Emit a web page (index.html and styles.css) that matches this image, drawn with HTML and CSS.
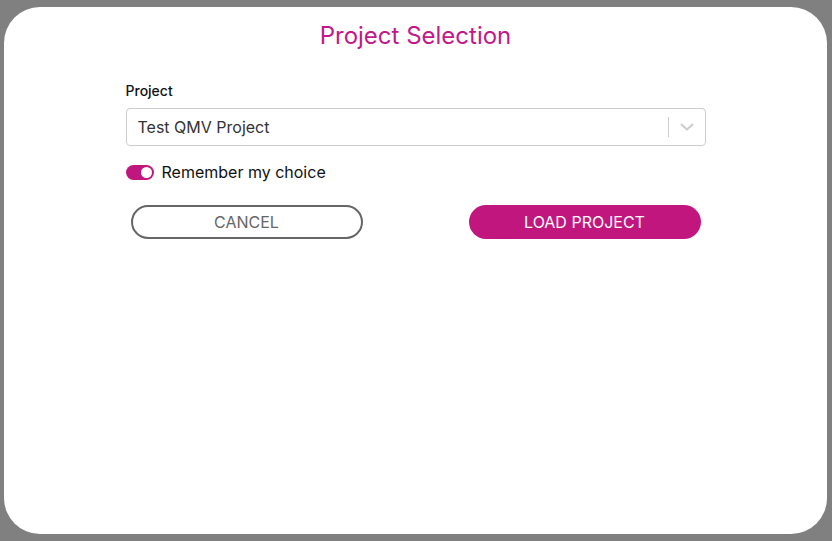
FILE: index.html
```html
<!DOCTYPE html>
<html>
<head>
<meta charset="utf-8">
<link rel="stylesheet" href="styles.css">
</head>
<body>
<div class="card">
  <h1 class="title">Project Selection</h1>
  <div class="content">
    <label class="label">Project</label>
    <div class="select">
      <span class="value">Test QMV Project</span>
      <span class="sep"></span>
      <span class="chev">
        <svg width="20" height="20" viewBox="0 0 20 20"><path d="M4.5 7.5 L10 12.5 L15.5 7.5" fill="none" stroke="#cccccc" stroke-width="2" stroke-linecap="round" stroke-linejoin="round"/></svg>
      </span>
    </div>
    <div class="remember">
      <span class="toggle"><span class="knob"></span></span>
      <span class="remember-text">Remember my choice</span>
    </div>
    <div class="buttons">
      <button class="btn btn-cancel">CANCEL</button>
      <button class="btn btn-load">LOAD PROJECT</button>
    </div>
  </div>
</div>
</body>
</html>
```
FILE: styles.css
```css
html, body {
  margin: 0;
  padding: 0;
}
body {
  background: #808080;
  width: 832px;
  height: 541px;
  padding: 7px 4px 0 4px;
  box-sizing: border-box;
  font-family: Inter, "Noto Sans", sans-serif;
}
.card {
  width: 823px;
  height: 527px;
  background: #ffffff;
  border-radius: 36px;
  box-sizing: border-box;
  padding-top: 14px;
}
.title {
  margin: 0;
  text-align: center;
  font-size: 24px;
  line-height: 30px;
  font-weight: 400;
  color: #c2198a;
}
.content {
  width: 580px;
  margin: 31px auto 0;
  display: flex;
  flex-direction: column;
}
.label {
  font-size: 14px;
  line-height: 17px;
  font-weight: 500;
  color: #111;
}
.select {
  margin-top: 9px;
  height: 38px;
  box-sizing: border-box;
  border: 1px solid #cccccc;
  border-radius: 4px;
  display: flex;
  align-items: center;
  padding-left: 11px;
}
.value {
  flex: 1;
  font-size: 16px;
  color: #333333;
}
.sep {
  width: 1px;
  height: 20px;
  background: #cccccc;
}
.chev {
  width: 36px;
  display: flex;
  justify-content: center;
  align-items: center;
}
.chev svg {
  display: block;
}
.remember {
  margin-top: 16px;
  display: flex;
  align-items: center;
  height: 20px;
}
.toggle {
  width: 28px;
  height: 15px;
  border-radius: 8px;
  background: #c2167f;
  position: relative;
  margin-right: 8px;
}
.knob {
  position: absolute;
  right: 2px;
  top: 2px;
  width: 11px;
  height: 11px;
  border-radius: 50%;
  background: #fff;
}
.remember-text {
  font-size: 16px;
  color: #111;
}
.buttons {
  margin-top: 23px;
  padding: 0 5px;
  display: flex;
  justify-content: space-between;
}
.btn {
  width: 232px;
  height: 34px;
  border-radius: 17px;
  font-family: Inter, "Noto Sans", sans-serif;
  font-size: 16px;
  box-sizing: border-box;
  cursor: pointer;
}
.btn-cancel {
  background: #fff;
  border: 2px solid #666666;
  color: #666666;
}
.btn-load {
  background: #c2167f;
  border: none;
  color: #ffffff;
}
```
